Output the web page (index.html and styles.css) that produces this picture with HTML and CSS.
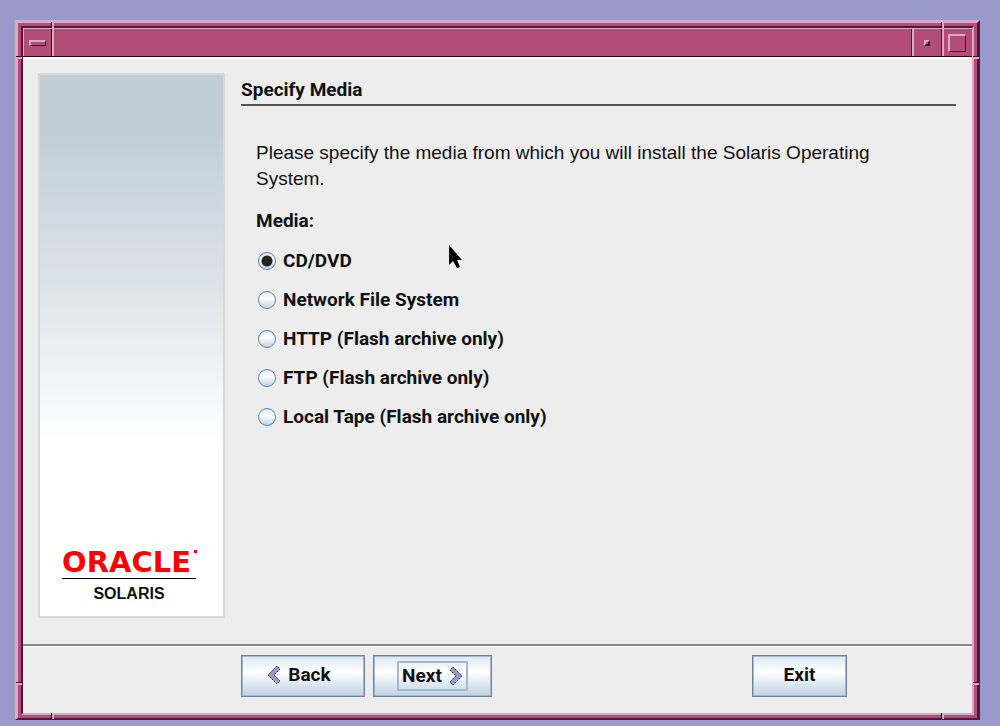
FILE: index.html
```html
<!DOCTYPE html>
<html lang="en">
<head>
<meta charset="utf-8">
<title>Specify Media</title>
<link rel="stylesheet" href="styles.css">
</head>
<body>
<div class="frame">
  <div class="window">
    <header class="titlebar">
      <button class="tb-btn tb-menu" aria-label="Window menu"><span class="glyph glyph-menu"></span></button>
      <div class="tb-title"></div>
      <button class="tb-btn tb-min" aria-label="Minimize"><span class="glyph glyph-min"></span></button>
      <button class="tb-btn tb-max" aria-label="Maximize"><span class="glyph glyph-max"></span></button>
    </header>
    <form class="wizard">
      <div class="main">
        <aside class="banner">
          <div class="brand">
            <div class="oracle">ORACLE<span class="mark"></span></div>
            <div class="solaris">SOLARIS</div>
          </div>
        </aside>
        <section class="content">
          <h1 class="title">Specify Media</h1>
          <div class="panel">
            <p class="intro">Please specify the media from which you will install the Solaris Operating System.</p>
            <fieldset class="media">
              <legend class="legend">Media:</legend>
              <label class="option"><input class="radio" type="radio" name="media" checked>CD/DVD</label>
              <label class="option"><input class="radio" type="radio" name="media">Network File System</label>
              <label class="option"><input class="radio" type="radio" name="media">HTTP (Flash archive only)</label>
              <label class="option"><input class="radio" type="radio" name="media">FTP (Flash archive only)</label>
              <label class="option"><input class="radio" type="radio" name="media">Local Tape (Flash archive only)</label>
            </fieldset>
          </div>
        </section>
      </div>
      <footer class="actions">
        <button class="btn btn-back" type="button"><svg class="chev" viewBox="0 0 14 20" width="14" height="20" aria-hidden="true"><path d="M10 1L1 10L10 19L13 16L7 10L13 4Z" fill="#9999cc" stroke="#223" stroke-dasharray="2 1"/></svg>Back</button>
        <button class="btn btn-next" type="button"><span class="focus">Next<svg class="chev" viewBox="0 0 14 20" width="14" height="20" aria-hidden="true"><path d="M4 1L13 10L4 19L1 16L7 10L1 4Z" fill="#9999cc" stroke="#223" stroke-dasharray="2 1"/></svg></span></button>
        <button class="btn btn-exit" type="button">Exit</button>
      </footer>
    </form>
  </div>
  <i class="notch notch-h notch-tl"></i><i class="notch notch-h notch-tr"></i>
  <i class="notch notch-h notch-bl"></i><i class="notch notch-h notch-br"></i>
  <i class="notch notch-v notch-top-l"></i><i class="notch notch-v notch-top-r"></i>
  <i class="notch notch-v notch-bot-l"></i><i class="notch notch-v notch-bot-r"></i>
</div>
<svg class="pointer" viewBox="0 0 14 24" width="14" height="24" aria-hidden="true"><path d="M1 0V20L5 16L9 23L12 22L9 15H14Z" fill="#000"/></svg>
</body>
</html>
```
FILE: styles.css
```css
* { box-sizing: border-box; }

body {
  margin: 0;
  padding: 20px 20px 6px 15px;
  min-height: 100vh;
  display: flex;
  background: #9999cc;
  color: #111;
  font: bold 19px/26px Roboto, "Liberation Sans", Arial, sans-serif;
}

button { font: inherit; color: inherit; }

/* Window frame */
.frame {
  position: relative;
  flex: 1;
  display: flex;
  padding: 3px;
  background: #b24d7a;
  border: 3px solid;
  border-color: #dcaac4 #5a1238 #5a1238 #dcaac4;
  border-bottom-width: 2px;
}
.window {
  flex: 1;
  display: flex;
  flex-direction: column;
  border: 2px solid;
  border-color: #5a1238 #dcaac4 #dcaac4 #5a1238;
  background: #ededed;
}

.notch { position: absolute; }
.notch-h { width: 6px; height: 3px; background: #dcaac4; border-top: 1px solid #300010; }
.notch-v { width: 3px; height: 6px; background: #dcaac4; border-left: 1px solid #300010; }
.notch-tl { left: -2px; top: 33px; }
.notch-tr { right: -2px; top: 33px; }
.notch-bl { left: -2px; bottom: 33px; }
.notch-br { right: -2px; bottom: 33px; }
.notch-top-l { left: 33px; top: -1px; }
.notch-top-r { right: 33px; top: -1px; }
.notch-bot-l { left: 33px; bottom: -1px; }
.notch-bot-r { right: 33px; bottom: -1px; }

/* Title bar */
.titlebar {
  display: flex;
  height: 29px;
  background: #b24d7a;
  border-top: 1px solid #dcaac4;
  border-bottom: 1px solid #300010;
}
.tb-title { flex: 1; border-left: 2px solid #dcaac4; }
.tb-btn {
  display: flex;
  align-items: center;
  justify-content: center;
  width: 30px;
  padding: 0 2px 0 0;
  border: 0;
  border-left: 2px solid #dcaac4;
  background: #b24d7a;
  box-shadow: -1px 0 #5a1238;
}
.tb-menu { width: 29px; padding: 0; border-left-width: 1px; border-right: 1px solid #300010; box-shadow: none; }
.glyph { border: 1px solid; border-color: #dcaac4 #4a1030 #4a1030 #dcaac4; }
.glyph-menu { width: 17px; height: 6px; border-top-width: 2px; border-left-width: 2px; }
.glyph-min { width: 6px; height: 6px; border-width: 2px; }
.glyph-max { width: 18px; height: 18px; border-top-width: 2px; border-left-width: 2px; }

/* Wizard body */
.wizard { flex: 1; display: flex; flex-direction: column; border-top: 2px solid #fff; }
.main { flex: 1; display: flex; gap: 16px; padding: 14px 16px 26px 15px; }
.banner {
  width: 187px;
  display: flex;
  flex-direction: column;
  justify-content: flex-end;
  padding: 0 27px 7px 22px;
  border: 2px solid #d8d8d8;
  background: linear-gradient(#c2ced7 0, #c2ced7 11%, #dce2ea 38%, #eef1f3 53%, #fff 68%);
}
.oracle {
  display: flex;
  padding-bottom: 2px;
  color: #f00;
  font: bold 29px/28px "DejaVu Sans", sans-serif;
  border-bottom: 1px solid #000;
}
.mark { flex: none; width: 3px; height: 3px; margin: 2px 0 0 3px; background: #f00; }
.solaris { font: bold 16px/30px "Liberation Sans", Arial, sans-serif; text-align: center; }

.content { flex: 1; }
.title {
  margin: 0;
  padding-top: 2px;
  font: inherit;
  line-height: 29px;
  border-bottom: 2px solid #555;
}
.panel { padding: 34px 15px 0; }
.intro { margin: 0; font-family: "Liberation Sans", Arial, sans-serif; font-weight: normal; }
.media { display: flex; flex-direction: column; margin: 0; padding: 0; border: 0; }
.legend { padding: 16px 0 7px; }
.option { display: flex; align-items: center; gap: 7px; height: 39px; }
.radio {
  appearance: none;
  width: 18px;
  height: 18px;
  margin: 0 0 0 2px;
  border: 1px solid #6382a0;
  border-radius: 50%;
  background: linear-gradient(#dce8f3, #fff 40%, #bed2e6);
}
.radio:checked {
  background: radial-gradient(circle, #222 0 5px, transparent 6px), linear-gradient(#dce8f3, #fff 40%, #bed2e6);
}

/* Buttons */
.actions {
  display: flex;
  gap: 8px;
  padding: 9px 125px 16px 218px;
  border-top: 2px solid #888;
  box-shadow: inset 0 1px #fff;
}
.btn {
  display: flex;
  align-items: center;
  justify-content: center;
  min-width: 95px;
  height: 42px;
  padding: 0 28px 2px;
  gap: 7px;
  border: 1px solid #6e8498;
  box-shadow: inset 0 0 0 1px #a3b8cc;
  background: linear-gradient(#dce8f3, #fff 40%, #bed2e6);
}
.btn-back { min-width: 124px; padding: 0 28px 2px 20px; }
.btn-next { min-width: 119px; padding: 0 20px; }
.btn-exit { margin-left: auto; }
.focus { display: flex; align-items: center; gap: 7px; padding: 0 3px; border: 2px solid #a3b8cc; }
.chev { flex: none; }

.pointer { position: absolute; left: 448px; top: 245px; }
```
